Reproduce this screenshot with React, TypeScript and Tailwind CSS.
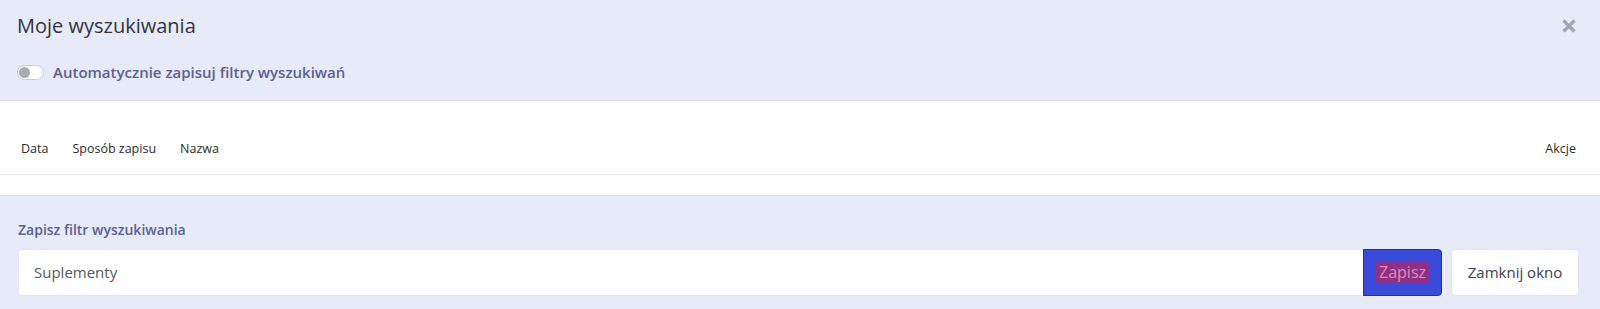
export default function App() {
  return (
    <div className="w-full h-[309px] overflow-hidden bg-[#e7eaf8] font-['Open_Sans',sans-serif]">
      {/* header */}
      <div className="relative h-[101px] border-b border-[#d9dcea] px-[17px] pt-[11px]">
        <h2 className="text-[20px] leading-[30px] text-[#33343d]">Moje wyszukiwania</h2>
        <button
          type="button"
          aria-label="Zamknij"
          className="absolute right-[23px] top-[18px] flex h-[16px] w-[16px] items-center justify-center"
        >
          <svg viewBox="0 0 16 16" className="h-[16px] w-[16px]">
            <path d="M2.5 2.5 L13.5 13.5 M13.5 2.5 L2.5 13.5" stroke="#a3a6b4" strokeWidth="3.2" strokeLinecap="butt" />
          </svg>
        </button>
        <label className="mt-[20px] flex items-center gap-[9px]">
          <span className="relative inline-block h-[15px] w-[27px] rounded-full border border-[#c9ccd6] bg-white">
            <span className="absolute left-[1px] top-[1px] h-[11px] w-[11px] rounded-full bg-[#a9adb7]" />
          </span>
          <span className="text-[15px] font-semibold text-[#5b6095]">Automatycznie zapisuj filtry wyszukiwań</span>
        </label>
      </div>

      {/* table */}
      <div className="h-[95px] border-b border-[#d9dcea] bg-white">
        <table className="w-full border-collapse">
          <thead>
            <tr className="border-b border-[#e6e7ec] text-left text-[12.5px] text-[#2a2b31]">
              <th className="h-[73px] w-px whitespace-nowrap pl-[21px] pr-[12px] pt-[24px] font-normal">Data</th>
              <th className="w-px whitespace-nowrap px-[12px] pt-[24px] font-normal">Sposób zapisu</th>
              <th className="px-[12px] pt-[24px] font-normal">Nazwa</th>
              <th className="pr-[24px] pt-[24px] text-right font-normal">Akcje</th>
            </tr>
          </thead>
          <tbody />
        </table>
      </div>

      {/* save filter */}
      <div className="pl-[18px] pr-[21px] pt-[22px]">
        <p className="text-[14px] font-semibold leading-[24px] text-[#5b6095]">Zapisz filtr wyszukiwania</p>
        <div className="mt-[7px] flex h-[47px] items-stretch">
          <input
            readOnly
            value="Suplementy"
            className="min-w-0 flex-1 rounded-l-[4px] border border-r-0 border-[#e2e4ee] bg-white px-[15px] text-[15px] text-[#555761] outline-none"
          />
          <button
            type="button"
            className="flex w-[79px] items-center justify-center rounded-r-[4px] border border-[#1b2bd0] bg-[#3a4bdb]"
          >
            <span className="rounded-[6px] bg-[#8b3189] px-[4px] py-[1px] text-[16px] leading-[21px] text-[#e98aa9]">Zapisz</span>
          </button>
          <button
            type="button"
            className="ml-[9px] w-[128px] rounded-[4px] border border-[#e2e4ee] bg-white text-[15px] text-[#3c3e4d]"
          >
            Zamknij okno
          </button>
        </div>
      </div>
    </div>
  );
}
